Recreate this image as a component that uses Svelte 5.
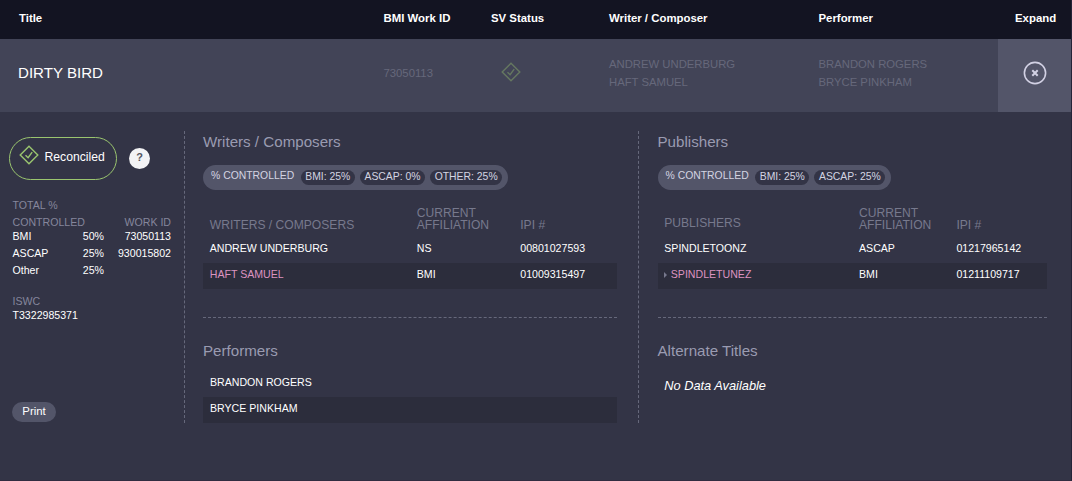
<script lang="ts">
    type Party = {
        name: string;
        affiliation: string;
        ipi: string;
        controlled?: boolean;
        expandable?: boolean;
    };

    type PartyGroup = {
        title: string;
        shares: string[];
        parties: Party[];
    };

    const work = {
        title: "DIRTY BIRD",
        workId: "73050113",
        iswc: "T3322985371",
        writers: ["ANDREW UNDERBURG", "HAFT SAMUEL"],
        performers: ["BRANDON ROGERS", "BRYCE PINKHAM"],
    };

    const totals = [
        { society: "BMI", share: "50%", id: "73050113" },
        { society: "ASCAP", share: "25%", id: "930015802" },
        { society: "Other", share: "25%", id: "" },
    ];

    const writers: PartyGroup = {
        title: "Writers / Composers",
        shares: ["BMI: 25%", "ASCAP: 0%", "OTHER: 25%"],
        parties: [
            { name: "ANDREW UNDERBURG", affiliation: "NS", ipi: "00801027593" },
            { name: "HAFT SAMUEL", affiliation: "BMI", ipi: "01009315497", controlled: true },
        ],
    };

    const publishers: PartyGroup = {
        title: "Publishers",
        shares: ["BMI: 25%", "ASCAP: 25%"],
        parties: [
            { name: "SPINDLETOONZ", affiliation: "ASCAP", ipi: "01217965142" },
            {
                name: "SPINDLETUNEZ",
                affiliation: "BMI",
                ipi: "01211109717",
                controlled: true,
                expandable: true,
            },
        ],
    };

    let expanded = $state(true);
</script>

{#snippet statusIcon()}
    <svg class="status-icon" viewBox="0 0 20 20" aria-hidden="true">
        <path d="M10 1.2 18.8 10 10 18.8 1.2 10Z" />
        <path d="M6.5 10.3 9.1 12.7 13.2 7.2" />
    </svg>
{/snippet}

{#snippet partyGroup(group: PartyGroup)}
    <h2>{group.title}</h2>
    <div class="shares">
        <span class="shares-label">% CONTROLLED</span>
        {#each group.shares as share}
            <span class="share">{share}</span>
        {/each}
    </div>
    <div class="table">
        <div class="row table-head">
            <span class:raised={group.title === "Publishers"}>{group.title.toUpperCase()}</span>
            <span>CURRENT<br />AFFILIATION</span>
            <span>IPI #</span>
        </div>
        {#each group.parties as party}
            <div class="row">
                <span class:controlled={party.controlled}>
                    {#if party.expandable}<i class="caret"></i>{/if}{party.name}
                </span>
                <span>{party.affiliation}</span>
                <span>{party.ipi}</span>
            </div>
        {/each}
    </div>
{/snippet}

<div class="results">
    <header class="columns">
        <span class="label">Title</span>
        <span>BMI Work ID</span>
        <span>SV Status</span>
        <span>Writer / Composer</span>
        <span>Performer</span>
        <span class="label-expand">Expand</span>
    </header>

    <div class="columns work">
        <span class="work-title">{work.title}</span>
        <span>{work.workId}</span>
        <span class="work-status">{@render statusIcon()}</span>
        <span class="names">
            {#each work.writers as name}<span>{name}</span>{/each}
        </span>
        <span class="names">
            {#each work.performers as name}<span>{name}</span>{/each}
        </span>
        <button
            class="expand"
            type="button"
            aria-label="Expand"
            onclick={() => (expanded = !expanded)}
        >
            <svg viewBox="0 0 24 24">
                <circle cx="12" cy="12" r="10.6" />
                <path d="m9.3 9.3 5.4 5.4m0-5.4-5.4 5.4" />
            </svg>
        </button>
    </div>

    {#if expanded}
        <div class="details">
            <aside>
                <div class="status">
                    <div class="reconciled">{@render statusIcon()}Reconciled</div>
                    <span class="help">?</span>
                </div>

                <div class="totals">
                    <div class="totals-head">
                        <span>TOTAL %<br />CONTROLLED</span>
                        <span>WORK ID</span>
                    </div>
                    {#each totals as total}
                        <div class="total">
                            <span>{total.society}</span>
                            <span>{total.share}</span>
                            <span>{total.id}</span>
                        </div>
                    {/each}
                </div>

                <div class="iswc">
                    <span>ISWC</span>
                    <strong>{work.iswc}</strong>
                </div>

                <button class="print" type="button">Print</button>
            </aside>

            <main>
                <section>{@render partyGroup(writers)}</section>
                <section class="lower">
                    <h2>Performers</h2>
                    <div class="performers">
                        {#each work.performers as name}
                            <div class="performer">{name}</div>
                        {/each}
                    </div>
                </section>
            </main>

            <main class="right">
                <section>{@render partyGroup(publishers)}</section>
                <section class="lower">
                    <h2>Alternate Titles</h2>
                    <p class="empty">No Data Available</p>
                </section>
            </main>
        </div>
    {/if}
</div>

<style>
    :global(body) {
        background: #333446;
    }

    .results {
        box-sizing: border-box;
        height: 481px;
        border-right: 1px solid #242438;
        border-bottom: 1px solid #302c40;
        background: #333446;
        color: #fff;
        font-family: "Liberation Sans", Arial, sans-serif;
        font-size: 10.6px;
    }

    button {
        border: 0;
        font: inherit;
        cursor: pointer;
    }

    .columns {
        display: grid;
        grid-template-columns: 365.5px 107.5px 118px 209.5px 179.5px 73px;
        padding-left: 18px;
        align-items: center;
    }

    header.columns {
        height: 39px;
        padding-bottom: 4px;
        box-sizing: border-box;
        background: #131422;
        font-size: 11.4px;
        font-weight: 700;
    }

    .label {
        padding-left: 1px;
    }

    .label-expand {
        padding-left: 17px;
    }

    .work {
        height: 73px;
        background: #424457;
        color: #66687b;
        font-size: 11.3px;
    }

    .work > span {
        padding-bottom: 6px;
    }

    .work > .work-title {
        padding-bottom: 7px;
        color: #fff;
        font-size: 15.1px;
    }

    .work > .work-status {
        padding: 0 0 8px 9.5px;
        opacity: 0.4;
    }

    .status-icon {
        display: block;
        width: 20px;
        height: 20px;
        flex: none;
        fill: none;
        stroke: #9ac56f;
        stroke-width: 1.4;
    }

    .names {
        display: grid;
        line-height: 18px;
    }

    .expand {
        display: grid;
        place-items: center;
        height: 100%;
        padding: 0 0 5px;
        background: #535569;
    }

    .expand svg {
        width: 24px;
        height: 24px;
        fill: none;
        stroke: #d2d1e4;
        stroke-width: 1.6;
    }

    .expand path {
        stroke-width: 2;
    }

    .details {
        display: grid;
        grid-template-columns: 184px 454px 409px;
        height: 292px;
        padding-top: 19px;
    }

    aside {
        display: flex;
        flex-direction: column;
        align-items: flex-start;
        padding: 6px 13px 0 12px;
    }

    .status {
        display: flex;
        align-items: center;
        gap: 12px;
        margin-left: -3px;
    }

    .reconciled {
        display: flex;
        box-sizing: border-box;
        align-items: center;
        gap: 5.5px;
        width: 108px;
        height: 43px;
        padding: 0 0 4px 9px;
        border: 1px solid #9ac56f;
        border-radius: 22px;
        font-size: 12.2px;
    }

    .reconciled .status-icon {
        margin-bottom: 3px;
    }

    .help {
        width: 21px;
        height: 21px;
        border-radius: 50%;
        background: #f3f3f5;
        color: #55555f;
        font-size: 11px;
        font-weight: 700;
        line-height: 19px;
        text-align: center;
    }

    .totals {
        width: 100%;
        margin-top: 17px;
        line-height: 17px;
    }

    .totals-head {
        display: flex;
        align-items: flex-end;
        justify-content: space-between;
        margin-bottom: -3px;
        color: #85869c;
    }

    .totals-head span:first-child,
    .total span:first-child,
    .iswc {
        padding-left: 0.5px;
    }

    .total {
        display: grid;
        grid-template-columns: 50px 42px 1fr;
        text-align: right;
    }

    .total span:first-child {
        text-align: left;
    }

    .iswc {
        display: grid;
        margin-top: 15px;
        line-height: 14px;
        color: #85869c;
    }

    .iswc strong {
        color: #fff;
        font-weight: 400;
    }

    .print {
        width: 44px;
        height: 20px;
        margin-top: auto;
        margin-bottom: 1px;
        padding: 0 0 2px;
        border-radius: 10px;
        background: #535569;
        color: #fff;
        font-size: 11.4px;
    }

    main {
        padding: 0 21px 0 18px;
        border-left: 1px dashed #66687b;
    }

    main.right {
        padding: 0 0 0 18.5px;
    }

    section {
        height: 186px;
    }

    .lower {
        box-sizing: border-box;
        height: 106px;
        padding-top: 22px;
        border-top: 1px dashed #66687b;
    }

    h2 {
        margin: 0;
        color: #9a9bb1;
        font-size: 15.15px;
        font-weight: 400;
        line-height: 22px;
    }

    .shares {
        display: inline-flex;
        box-sizing: border-box;
        align-items: center;
        gap: 5px;
        height: 25px;
        margin-top: 12px;
        padding: 0 5.5px 0 8px;
        border-radius: 13px;
        background: #535569;
        color: #d4d4e2;
        font-size: 10.4px;
    }

    .shares-label {
        margin-right: 1.5px;
        padding-bottom: 4px;
    }

    .share {
        height: 15px;
        padding: 0 4.6px;
        border-radius: 8px;
        background: #333446;
        line-height: 14px;
    }

    .table {
        margin-top: 17px;
    }

    .row {
        display: grid;
        grid-template-columns: 2fr 1fr 1fr;
        height: 26px;
        line-height: 23px;
    }

    .row > span {
        padding-left: 6.75px;
    }

    .table-head {
        height: 30px;
        align-content: start;
        align-items: end;
        color: #77798d;
        font-size: 12.1px;
        line-height: 12px;
    }

    .row > .raised {
        padding-bottom: 2px;
    }

    .row:nth-child(odd):not(.table-head),
    .performer:nth-child(even) {
        background: #2c2d3c;
    }

    .controlled {
        color: #dc93c0;
    }

    .caret {
        display: inline-block;
        margin-right: 3.5px;
        border: 3px solid transparent;
        border-right: 0;
        border-left-color: #77798d;
        vertical-align: 0.5px;
    }

    .performers {
        margin-top: 9px;
    }

    .performer {
        height: 26px;
        padding-left: 7px;
        line-height: 23px;
    }

    .empty {
        margin: 14px 0 0 6.75px;
        font-size: 12.8px;
        font-style: italic;
        line-height: 20px;
    }
</style>
